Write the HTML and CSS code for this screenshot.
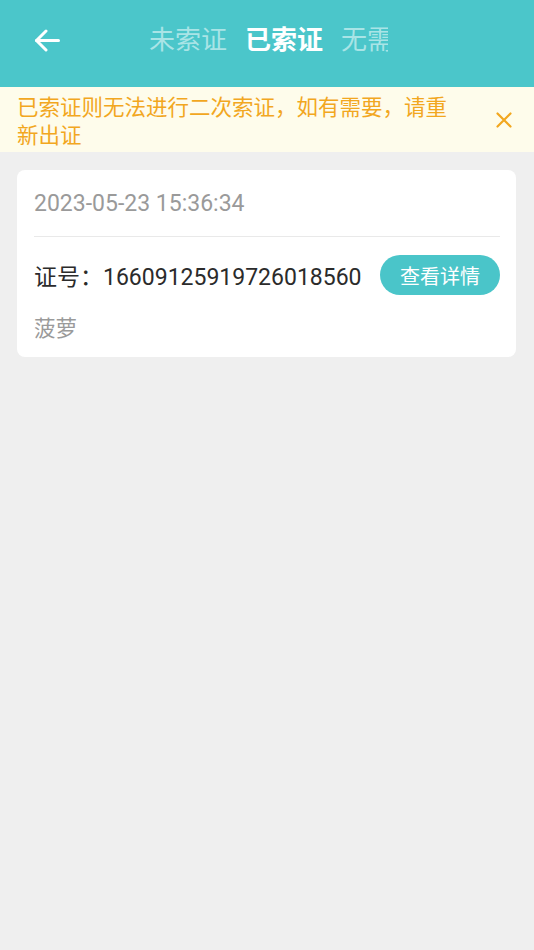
FILE: index.html
```html
<!DOCTYPE html>
<html lang="zh-CN">
<head>
<meta charset="utf-8">
<meta name="viewport" content="width=device-width, initial-scale=1">
<title>已索证</title>
<link rel="stylesheet" href="styles.css">
</head>
<body>
<div class="page">
  <header class="topbar">
    <button class="back" aria-label="返回">
      <svg width="26" height="23" viewBox="0 0 26 23" fill="none" stroke="#fff" stroke-width="3" stroke-linecap="round" stroke-linejoin="round">
        <path d="M2.5 11.5H24.5"/>
        <path d="M12 2L2.5 11.5L12 21"/>
      </svg>
    </button>
    <nav class="tabs">
      <span class="tab">未索证</span>
      <span class="tab active">已索证</span>
      <span class="tab">无需索证</span>
    </nav>
  </header>
  <div class="notice">
    <p class="notice-text">已索证则无法进行二次索证，如有需要，请重新出证</p>
    <svg class="notice-close" width="16" height="16" viewBox="0 0 16 16" fill="none" stroke="#F2A71F" stroke-width="2.2" stroke-linecap="round">
      <path d="M1.5 1.5L14.5 14.5M14.5 1.5L1.5 14.5"/>
    </svg>
  </div>
  <main class="list">
    <section class="card">
      <div class="card-date">2023-05-23 15:36:34</div>
      <div class="card-row">
        <span class="cert">证号：16609125919726018560</span>
        <button class="detail-btn">查看详情</button>
      </div>
      <div class="card-name">菠萝</div>
    </section>
  </main>
</div>
</body>
</html>
```

FILE: styles.css
```css
* { box-sizing: border-box; }
html, body {
  margin: 0;
  padding: 0;
  background: #efefef;
}
body {
  font-family: Roboto, "Noto Sans CJK SC", "Noto Sans", sans-serif;
}
.page {
  width: 534px;
  min-height: 950px;
  background: #efefef;
}
.topbar {
  height: 87px;
  background: #4bc6ca;
  display: flex;
  align-items: center;
  padding-bottom: 7px;
}
.back {
  border: 0;
  background: none;
  padding: 0;
  margin-left: 34px;
  width: 26px;
  height: 23px;
  display: flex;
}
.tabs {
  margin-left: 80px;
  width: 248px;
  overflow: hidden;
  display: flex;
  white-space: nowrap;
}
.tab {
  flex: none;
  padding: 0 9px;
  font-size: 26px;
  line-height: 36px;
  color: #a9e4e6;
}
.tab.active {
  color: #ffffff;
  font-weight: 600;
}
.notice {
  height: 65px;
  background: #fefceb;
  display: flex;
  align-items: center;
  padding-left: 17px;
}
.notice-text {
  margin: 0;
  width: 440px;
  font-size: 21.5px;
  line-height: 28px;
  color: #f2a71f;
  padding-top: 5px;
}
.notice-close {
  margin-left: 39px;
}
.list {
  padding: 18px 18px 0 17px;
}
.card {
  background: #fff;
  border-radius: 8px;
  padding: 0 16px 0 17px;
  height: 187px;
}
.card-date {
  height: 67px;
  display: flex;
  align-items: center;
  font-size: 23px;
  color: #9a9a9a;
  border-bottom: 1px solid #e9e9e9;
}
.card-row {
  display: flex;
  align-items: center;
  justify-content: space-between;
  padding-top: 18px;
}
.cert {
  font-size: 23px;
  color: #2b2b2b;
}
.detail-btn {
  width: 120px;
  height: 40px;
  border: 0;
  border-radius: 20px;
  background: #4ac5c9;
  color: #fff;
  font-family: inherit;
  font-size: 20px;
  padding: 0;
}
.card-name {
  margin-top: 19px;
  font-size: 21.5px;
  line-height: 30px;
  color: #9a9a9a;
}
```
